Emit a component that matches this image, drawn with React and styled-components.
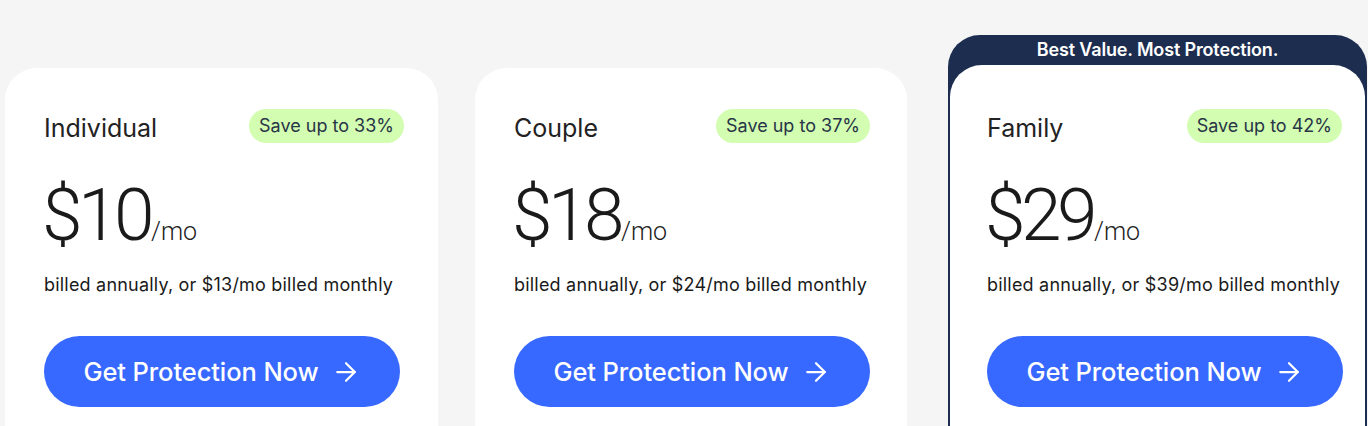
import React from "react";
import styled, { createGlobalStyle } from "styled-components";
import { ArrowRight } from "lucide-react";

const GlobalStyle = createGlobalStyle`
  body {
    margin: 0;
    background: #f5f5f5;
    font-family: Inter, "Liberation Sans", sans-serif;
    overflow: hidden;
  }
`;

const Row = styled.div`
  display: flex;
  align-items: flex-start;
  padding: 35px 0 0 5px;
  height: 426px;
  box-sizing: border-box;
`;

const Card = styled.div`
  width: ${(p) => p.$width}px;
  margin-right: ${(p) => p.$gap || 0}px;
  margin-top: 33px;
  height: 420px;
  background: #fff;
  border-radius: 32px;
  padding: 41px 0 0 39px;
  box-sizing: border-box;
`;

const Featured = styled.div`
  width: 419px;
  height: 440px;
  background: #1d2d4f;
  border-radius: 32px 32px 0 0;
  padding: 0 2px;
  box-sizing: border-box;
  display: flex;
  flex-direction: column;
`;

const Banner = styled.div`
  height: 30px;
  display: flex;
  align-items: center;
  justify-content: center;
  color: #fff;
  font-size: 18px;
  font-weight: 600;
  letter-spacing: -0.15px;
  padding-bottom: 2px;
  box-sizing: border-box;
`;

const FeaturedInner = styled(Card)`
  width: auto;
  margin-top: 0;
  flex: 1;
  padding: 44px 0 0 37px;
`;

const Content = styled.div`
  width: ${(p) => p.$width}px;
`;

const Header = styled.div`
  display: flex;
  align-items: center;
  justify-content: space-between;
  height: 34px;
`;

const Title = styled.div`
  font-size: 25px;
  color: #222;
  font-weight: 400;
  padding-top: 4px;
`;

const Badge = styled.div`
  height: 34px;
  line-height: 34px;
  padding: 0 10px;
  border-radius: 17px;
  background: #d3fdb1;
  color: #283447;
  font-size: 18px;
`;

const Price = styled.div`
  margin-top: 36px;
  margin-left: -2px;
  display: flex;
  align-items: baseline;
  color: #1a1a1a;
  line-height: 1;
`;

const Amount = styled.span`
  font-family: Roboto, "Liberation Sans", sans-serif;
  font-size: 73px;
  font-weight: 300;
  letter-spacing: -4.5px;
`;

const Per = styled.span`
  font-family: Roboto, "Liberation Sans", sans-serif;
  font-size: 25px;
  font-weight: 300;
  color: #222;
  margin-left: 1px;
`;

const Billing = styled.div`
  margin-top: 22px;
  font-size: 18px;
  letter-spacing: 0.2px;
  color: #1a1a1a;
`;

const Button = styled.button`
  margin-top: 41px;
  width: 356px;
  height: 71px;
  border: none;
  border-radius: 36px;
  background: #3768ff;
  color: #fff;
  font-family: Inter, "Liberation Sans", sans-serif;
  font-size: 25.5px;
  font-weight: 500;
  display: flex;
  align-items: center;
  justify-content: center;
  gap: 12px;
  letter-spacing: -0.1px;
`;

const plans = [
  { name: "Individual", save: "33%", price: "$10", monthly: "$13", width: 360 },
  { name: "Couple", save: "37%", price: "$18", monthly: "$24", width: 356 },
  { name: "Family", save: "42%", price: "$29", monthly: "$39", width: 355 },
];

function PlanBody({ plan }) {
  return (
    <Content $width={plan.width}>
      <Header>
        <Title>{plan.name}</Title>
        <Badge>Save up to {plan.save}</Badge>
      </Header>
      <Price>
        <Amount>{plan.price}</Amount>
        <Per>/mo</Per>
      </Price>
      <Billing>billed annually, or {plan.monthly}/mo billed monthly</Billing>
      <Button>
        Get Protection Now
        <ArrowRight size={30} strokeWidth={1.8} />
      </Button>
    </Content>
  );
}

export default function App() {
  return (
    <>
      <GlobalStyle />
      <Row>
        <Card $width={433} $gap={37}>
          <PlanBody plan={plans[0]} />
        </Card>
        <Card $width={432} $gap={41}>
          <PlanBody plan={plans[1]} />
        </Card>
        <Featured>
          <Banner>Best Value. Most Protection.</Banner>
          <FeaturedInner>
            <PlanBody plan={plans[2]} />
          </FeaturedInner>
        </Featured>
      </Row>
    </>
  );
}
